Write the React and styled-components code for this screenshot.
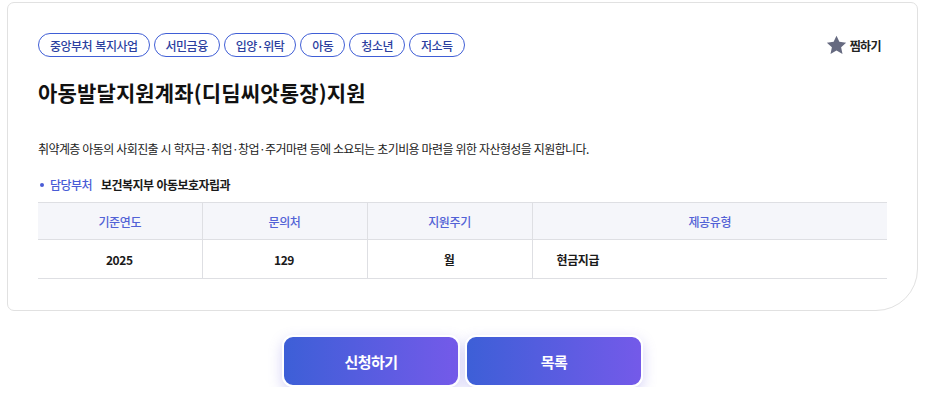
import React from 'react';
import styled, { createGlobalStyle } from 'styled-components';

const GlobalStyle = createGlobalStyle`
  * {
    box-sizing: border-box;
  }

  body {
    margin: 0;
    background: #ffffff;
    font-family: 'Noto Sans CJK KR', 'Noto Sans', sans-serif;
    color: #1a1a1a;
  }
`;

const Page = styled.div`
  padding: 2px 7px 0;
`;

const Card = styled.section`
  border: 1px solid #e1e1e1;
  border-radius: 7px 7px 42px 7px;
  padding: 30px 30px 31px 30px;
  background: #ffffff;
`;

const TopRow = styled.div`
  display: flex;
  justify-content: space-between;
  align-items: center;
`;

const TagList = styled.ul`
  display: flex;
  gap: 4px;
  margin: 0;
  padding: 0;
  list-style: none;
`;

const Tag = styled.li`
  height: 24px;
  padding: 0 11px;
  display: flex;
  align-items: center;
  border: 1px solid #3f5ed6;
  border-radius: 12px;
  color: #2c3f9f;
  font-size: 12px;
  font-weight: 500;
  letter-spacing: -0.5px;
  word-spacing: 1px;
  white-space: nowrap;
`;

const LikeButton = styled.button`
  display: flex;
  align-items: center;
  gap: 3px;
  margin-right: 6px;
  padding: 0;
  border: none;
  background: none;
  font-family: inherit;
  font-size: 12px;
  font-weight: 700;
  letter-spacing: -0.6px;
  color: #222222;
  cursor: pointer;
`;

const Title = styled.h2`
  margin: 20px 0 0;
  font-size: 21px;
  font-weight: 700;
  letter-spacing: 0.15px;
  line-height: 30px;
  color: #111111;
`;

const Description = styled.p`
  margin: 33px 0 0;
  font-size: 12px;
  letter-spacing: -0.6px;
  word-spacing: 0.5px;
  line-height: 18px;
  color: #222222;
`;

const InfoLine = styled.div`
  display: flex;
  align-items: center;
  margin-top: 18px;
  font-size: 12px;
  line-height: 18px;
  letter-spacing: -0.55px;
  word-spacing: 1px;
`;

const InfoLabel = styled.span`
  position: relative;
  padding-left: 12px;
  margin-right: 9px;
  color: #4a5cd6;
  font-weight: 500;

  &::before {
    content: '';
    position: absolute;
    left: 2px;
    top: 7px;
    width: 4px;
    height: 4px;
    border-radius: 50%;
    background: #4a5cd6;
  }
`;

const InfoValue = styled.span`
  color: #1a1a1a;
  font-weight: 700;
`;

const Table = styled.table`
  width: 100%;
  margin-top: 8px;
  border-collapse: collapse;
  table-layout: fixed;
  font-size: 12px;
  letter-spacing: -0.4px;
`;

const HeadCell = styled.th`
  height: 37px;
  background: #f5f6fa;
  border-top: 1px solid #dedfe3;
  border-bottom: 1px solid #dedfe3;
  border-left: ${({ $first }) => ($first ? 'none' : '1px solid #dedfe3')};
  color: #5262d6;
  font-weight: 500;
  text-align: center;
`;

const BodyCell = styled.td`
  height: 39px;
  border-bottom: 1px solid #dedfe3;
  border-left: ${({ $first }) => ($first ? 'none' : '1px solid #dedfe3')};
  color: #1a1a1a;
  font-weight: 700;
  text-align: ${({ $align }) => $align || 'center'};
  padding-left: ${({ $align }) => ($align === 'left' ? '24px' : '0')};
`;

const ButtonRow = styled.div`
  display: flex;
  justify-content: center;
  gap: 5px;
  margin-top: 24px;
`;

const ActionButton = styled.button`
  width: 178px;
  height: 52px;
  border: 2px solid #ffffff;
  border-radius: 11px;
  background: linear-gradient(90deg, #3d5fd7 0%, #745ae9 100%);
  box-shadow: 0 5px 14px rgba(108, 96, 226, 0.28);
  color: #ffffff;
  font-family: inherit;
  font-size: 15px;
  font-weight: 700;
  letter-spacing: -0.5px;
  cursor: pointer;
`;

const StarIcon = () => (
  <svg width="21" height="20" viewBox="0 0 24 23" aria-hidden="true">
    <path
      d="M12 0.8l3.3 7.1 7.8 0.9-5.8 5.3 1.6 7.7L12 17.9l-6.9 3.9 1.6-7.7L0.9 8.8l7.8-0.9z"
      fill="#666a80"
    />
  </svg>
);

const tags = ['중앙부처 복지사업', '서민금융', '입양·위탁', '아동', '청소년', '저소득'];

const App = () => (
  <Page>
    <GlobalStyle />
    <Card>
      <TopRow>
        <TagList>
          {tags.map((tag) => (
            <Tag key={tag}>{tag}</Tag>
          ))}
        </TagList>
        <LikeButton type="button">
          <StarIcon />
          찜하기
        </LikeButton>
      </TopRow>
      <Title>아동발달지원계좌(디딤씨앗통장)지원</Title>
      <Description>
        취약계층 아동의 사회진출 시 학자금·취업·창업·주거마련 등에 소요되는 초기비용 마련을 위한 자산형성을 지원합니다.
      </Description>
      <InfoLine>
        <InfoLabel>담당부처</InfoLabel>
        <InfoValue>보건복지부 아동보호자립과</InfoValue>
      </InfoLine>
      <Table>
        <colgroup>
          <col style={{ width: '164px' }} />
          <col style={{ width: '165px' }} />
          <col style={{ width: '165px' }} />
          <col />
        </colgroup>
        <thead>
          <tr>
            <HeadCell $first>기준연도</HeadCell>
            <HeadCell>문의처</HeadCell>
            <HeadCell>지원주기</HeadCell>
            <HeadCell>제공유형</HeadCell>
          </tr>
        </thead>
        <tbody>
          <tr>
            <BodyCell $first>2025</BodyCell>
            <BodyCell>129</BodyCell>
            <BodyCell>월</BodyCell>
            <BodyCell $align="left">현금지급</BodyCell>
          </tr>
        </tbody>
      </Table>
    </Card>
    <ButtonRow>
      <ActionButton type="button">신청하기</ActionButton>
      <ActionButton type="button">목록</ActionButton>
    </ButtonRow>
  </Page>
);

export default App;
